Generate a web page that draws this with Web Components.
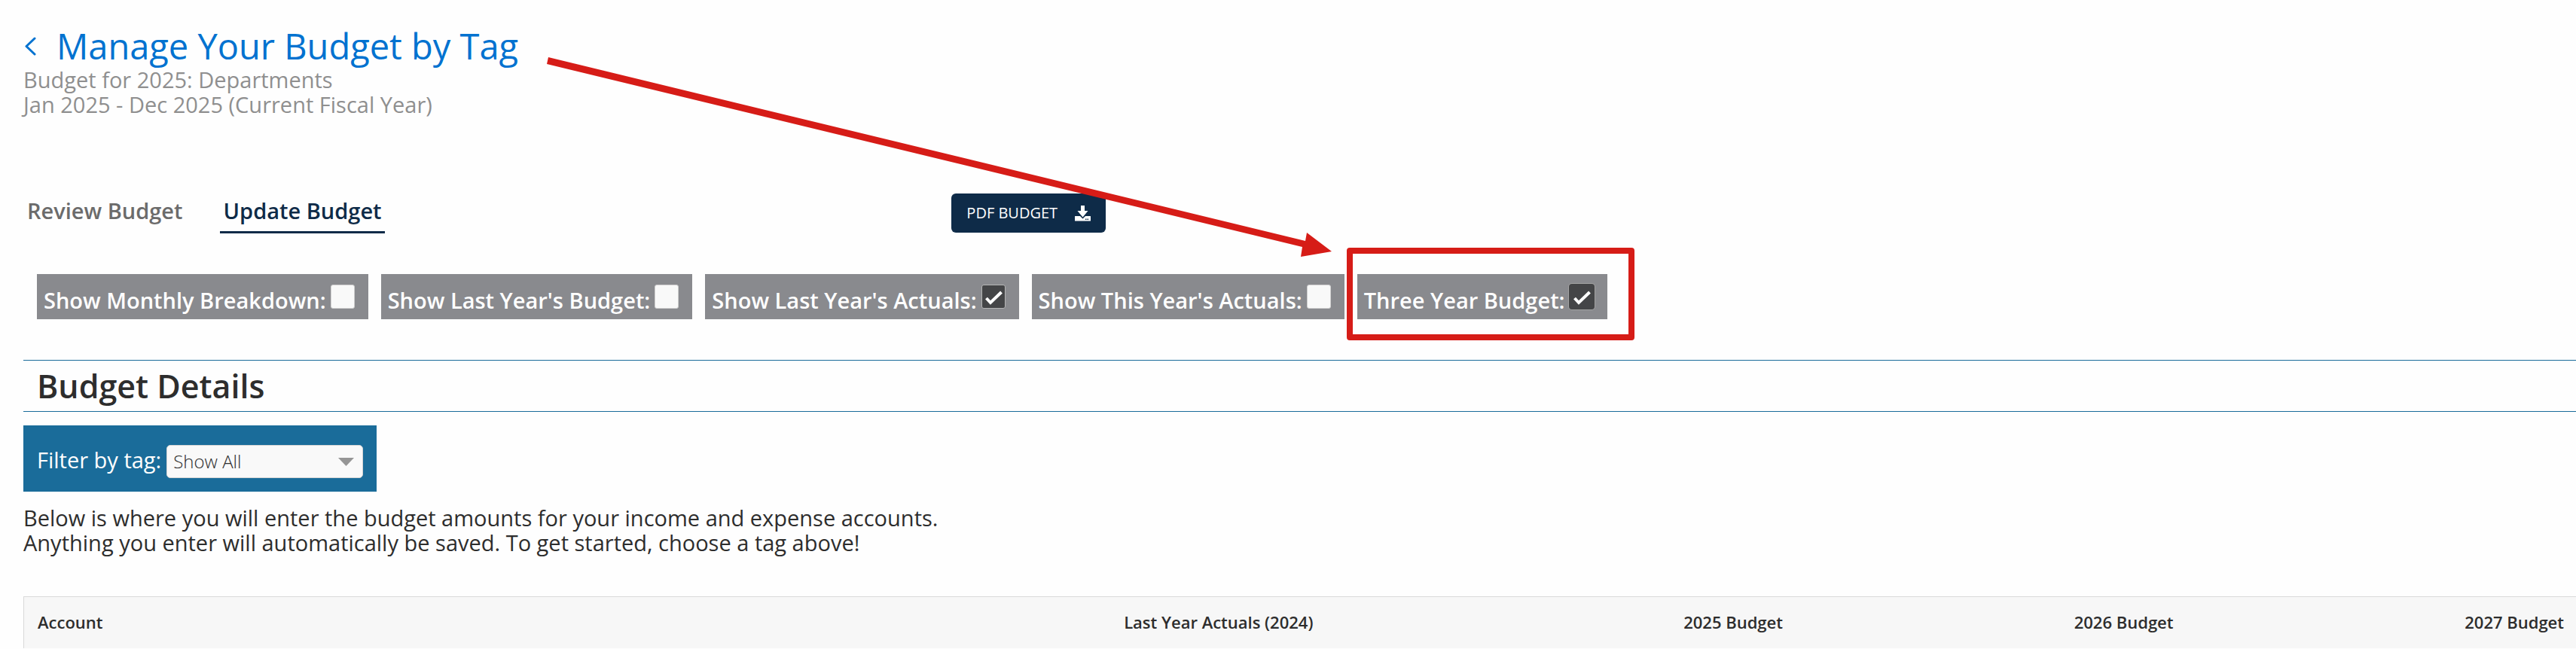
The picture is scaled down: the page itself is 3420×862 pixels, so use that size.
<!DOCTYPE html>
<html lang="en">
<head>
<meta charset="utf-8">
<title>Manage Your Budget by Tag</title>
<style>
  body {
    margin: 0;
    background: #fefefe;
    color: #2d2d2d;
    font: 400 29px/33px "Open Sans", sans-serif;
  }
</style>
</head>
<body>
<budget-page></budget-page>

<script>
const define = (name, html) => {
  const template = document.createElement("template");
  template.innerHTML = html;
  customElements.define(
    name,
    class extends HTMLElement {
      constructor() {
        super();
        this.attachShadow({ mode: "open" });
        this.shadowRoot.appendChild(template.content.cloneNode(true));
      }
      connectedCallback() {
        const input = this.shadowRoot.querySelector("input");
        if (input) input.checked = this.hasAttribute("checked");
      }
    }
  );
};

define("page-heading", `
  <style>
    :host { display: block; color: #8f8f8f; }
    a {
      display: inline-flex;
      align-items: center;
      gap: 27px;
      color: #0072d0;
      text-decoration: none;
    }
    h1 { margin: 0; font-size: 47px; font-weight: 400; line-height: 56px; }
    svg { display: block; margin-left: 1px; }
    div { display: flow-root; }
    p { margin: 0; }
  </style>
  <div>
    <a href="#budgets">
      <svg width="16" height="26" viewBox="0 0 16 26" fill="none" stroke="currentColor" stroke-width="3" stroke-linecap="round" stroke-linejoin="round"><path d="M14 3 3 13.500l11 10.500"/></svg>
      <h1><slot name="title"></slot></h1>
    </a>
  </div>
  <p><slot name="budget"></slot></p>
  <p><slot name="period"></slot></p>
`);

define("tab-link", `
  <style>
    :host { display: block; }
    a {
      display: block;
      padding: 0 4px 7px 5px;
      border-bottom: 3px solid transparent;
      color: #6b6b6b;
      font-weight: 600;
      line-height: 40px;
      text-decoration: none;
      white-space: nowrap;
    }
    :host([active]) a { color: #0e2b48; border-color: #0e2b48; }
  </style>
  <a href="#tab"><slot></slot></a>
`);

define("download-button", `
  <style>
    :host { display: block; }
    button {
      display: flex;
      align-items: center;
      gap: 23px;
      padding: 11px 20px;
      border: 0;
      border-radius: 6px;
      background: #0e2b48;
      color: #fff;
      font: 400 20px/30px "Open Sans", sans-serif;
      white-space: nowrap;
      cursor: pointer;
    }
  </style>
  <button type="button">
    <slot></slot>
    <svg width="21" height="21" viewBox="0 0 21 21" fill="currentColor"><path d="M8 0h5v7h4.500L10.500 15.500 3.500 7H8z"/><path fill-rule="evenodd" d="M.5 14h6.500l3.500 3.500L14 14h6.500a.5.500 0 0 1 .5.500v5.500a.5.500 0 0 1-.5.500H.5a.5.500 0 0 1-.5-.5v-5.500A.5.500 0 0 1 .5 14zM14 17.500V19h1.500v-1.500zm2.500 0V19H18v-1.500z"/></svg>
  </button>
`);

define("budget-toggle", `
  <style>
    :host { display: block; position: relative; }
    label {
      display: flex;
      align-items: baseline;
      gap: 6px;
      padding: 14px 18px 9px 9px;
      background: #898a8e;
      color: #fff;
      font-weight: 600;
      white-space: nowrap;
    }
    input {
      appearance: none;
      box-sizing: border-box;
      width: 32px;
      height: 32px;
      margin: 0;
      border: 1px solid #cfcfcf;
      border-radius: 3px;
      background: #f9f9f9;
    }
    input:checked {
      border-color: #b5b5b5;
      background: #444547 url('data:image/svg+xml,<svg xmlns="http://www.w3.org/2000/svg" viewBox="0 0 30 30"><path d="M5.500 17l5.500 6L25.500 9" fill="none" stroke="white" stroke-width="4"/></svg>') center / 30px no-repeat;
    }
    :host([focused]) input { box-shadow: 0 0 0 1px #444547, 0 0 0 2px #a3a3a3; border-color: #444547; }
  </style>
  <label><slot></slot><input type="checkbox"></label>
  <slot name="callout"></slot>
`);

define("section-title", `
  <style>
    :host { display: block; border: solid #1a6c9a; border-width: 1px 0; }
    h2 { margin: 0; padding-left: 18px; font-size: 43px; font-weight: 600; line-height: 67px; }
  </style>
  <h2><slot></slot></h2>
`);

define("tag-filter", `
  <style>
    :host { display: flex; }
    form {
      display: flex;
      align-items: baseline;
      gap: 7px;
      padding: 26px 18px;
      padding-bottom: 18px;
      background: #1a6c9a;
      color: #fff;
    }
    .box { display: grid; align-items: center; }
    .box > * { grid-area: 1 / 1; }
    select {
      appearance: none;
      box-sizing: border-box;
      width: 261px;
      height: 44px;
      padding: 0 40px 0 8px;
      border: 1px solid #d5d5d5;
      border-radius: 5px;
      background: #f9f9f9;
      color: #2d2d2d;
      font: 300 24px/42px "Open Sans", sans-serif;
    }
    svg { justify-self: end; margin-right: 12px; pointer-events: none; }
  </style>
  <form>
    <label for="tag"><slot></slot></label>
    <div class="box">
      <select id="tag"><option>Show All</option></select>
      <svg width="21" height="11" viewBox="0 0 21 11" fill="#959595"><path d="M0 0h21L10.500 11z"/></svg>
    </div>
  </form>
`);

define("budget-table", `
  <style>
    :host { display: block; }
    table { width: 100%; table-layout: fixed; border-collapse: separate; border-spacing: 0; }
    th {
      padding: 18px 16px 20px 18px;
      border-top: 1px solid #d9d9d9;
      background: #f7f7f7;
      font-size: 22px;
      font-weight: 600;
      line-height: 30px;
      text-align: right;
    }
    th:first-child { border-left: 1px solid #d9d9d9; text-align: left; }
    .account { width: 32.6%; }
    .wide { width: 18.4%; }
  </style>
  <table>
    <colgroup><col class="account"><col class="wide"><col class="wide"><col><col></colgroup>
    <thead>
      <tr>
        <th scope="col">Account</th>
        <th scope="col">Last Year Actuals (2024)</th>
        <th scope="col">2025 Budget</th>
        <th scope="col">2026 Budget</th>
        <th scope="col">2027 Budget</th>
      </tr>
    </thead>
  </table>
`);

// red frame around a toggle, with the arrow that leads to it from the heading
define("red-callout", `
  <style>
    :host {
      position: absolute;
      inset: -35px -36px -28px -14px;
      border: 8px solid #d61c17;
      border-radius: 4px;
      pointer-events: none;
    }
    svg { position: absolute; right: calc(100% + 28px); bottom: calc(100% - 6px); }
  </style>
  <svg width="1043" height="267" viewBox="0 0 1043 267" fill="#d61c17"><path d="M3 0 1008 244l2-11 33 25-41 7 2-13L1 9z"/></svg>
`);

define("budget-page", `
  <style>
    :host { display: block; padding: 33px 0 0 31px; }
    .bar {
      display: grid;
      grid-template-columns: 4fr 7fr;
      align-items: start;
      justify-items: start;
      margin-top: 102px;
    }
    nav { display: flex; gap: 45px; margin-top: 3px; }
    .toggles { display: flex; flex-wrap: wrap; gap: 17px; margin: 54px 0 54px 18px; }
    tag-filter { margin: 18px 0; }
    p { margin: 0 0 55px; }
  </style>
  <page-heading>
    <span slot="title">Manage Your Budget by Tag</span>
    <span slot="budget">Budget for 2025: Departments</span>
    <span slot="period">Jan 2025 - Dec 2025 (Current Fiscal Year)</span>
  </page-heading>
  <div class="bar">
    <nav>
      <tab-link>Review Budget</tab-link>
      <tab-link active>Update Budget</tab-link>
    </nav>
    <download-button>PDF BUDGET</download-button>
  </div>
  <div class="toggles">
    <budget-toggle>Show Monthly Breakdown:</budget-toggle>
    <budget-toggle>Show Last Year's Budget:</budget-toggle>
    <budget-toggle checked>Show Last Year's Actuals:</budget-toggle>
    <budget-toggle>Show This Year's Actuals:</budget-toggle>
    <budget-toggle checked focused>Three Year Budget:<red-callout slot="callout"></red-callout></budget-toggle>
  </div>
  <section-title>Budget Details</section-title>
  <tag-filter>Filter by tag:</tag-filter>
  <p>Below is where you will enter the budget amounts for your income and expense accounts.<br>Anything you enter will automatically be saved. To get started, choose a tag above!</p>
  <budget-table></budget-table>
`);
</script>
</body>
</html>
